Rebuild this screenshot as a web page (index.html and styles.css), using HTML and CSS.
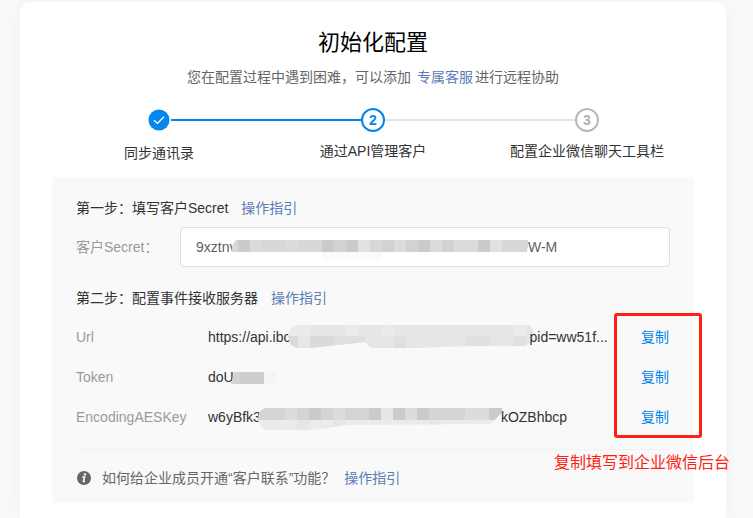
FILE: index.html
```html
<!DOCTYPE html>
<html lang="zh-CN">
<head>
  <meta charset="UTF-8">
  <meta name="viewport" content="width=device-width, initial-scale=1.0">
  <title>初始化配置</title>
  <link rel="stylesheet" href="styles.css">
</head>
<body>
  <main class="card">
    <h1>初始化配置</h1>
    <p class="subtitle">您在配置过程中遇到困难，可以添加 <a href="#">专属客服</a>进行远程协助</p>

    <ol class="steps">
      <li class="step done">
        <span class="step-icon">
          <svg width="24" height="24" viewBox="0 0 24 24" aria-hidden="true">
            <circle cx="12" cy="12" r="10.5" fill="#0486ec"/>
            <path d="M7 12.2l3.4 3.2 6.6-6.6" fill="none" stroke="#fff" stroke-width="1.3"/>
          </svg>
        </span>
        <span class="step-title">同步通讯录</span>
      </li>
      <li class="step active">
        <span class="step-icon">2</span>
        <span class="step-title">通过API管理客户</span>
      </li>
      <li class="step">
        <span class="step-icon">3</span>
        <span class="step-title">配置企业微信聊天工具栏</span>
      </li>
    </ol>

    <section class="panel">
      <h2>第一步：填写客户Secret <a href="#">操作指引</a></h2>
      <div class="form-row">
        <label for="secret">客户Secret：</label>
        <div class="field">
          <input type="text" id="secret" name="secret" value="9xztnv">
          <span class="field-mask">
            <svg width="296" height="20" viewBox="232 240 296 20" aria-hidden="true">
              <path d="M236 240H529L527 252H232Q231 244 236 240z" fill="#d7d8d9"/>
              <path d="M238 246h12M322 246h12M346 246h12M418 246h12M478 246h12" stroke="#cacbcd" stroke-width="12"/>
              <path d="M334 246h12M382 246h12M406 246h12M442 246h12" stroke="#d1d2d3" stroke-width="12"/>
              <path d="M250 246h12M286 246h12M394 246h12M430 246h12M454 246h24" stroke="#dbdbdc" stroke-width="12"/>
              <path d="M358 246h12M490 246h12" stroke="#e1e1e1" stroke-width="12"/>
              <path d="M322 256h60" stroke="#fafafa" stroke-width="8"/>
            </svg>
            <span>W-M</span>
          </span>
        </div>
      </div>

      <h2>第二步：配置事件接收服务器 <a href="#">操作指引</a></h2>
      <div class="config">
        <div class="config-row">
          <span class="config-name">Url</span>
          <span class="config-value">
            <span>https://api.ibc</span>
            <svg class="mask" width="246" height="24" viewBox="288 325 246 24" aria-hidden="true">
              <clipPath id="url-shape">
                <path d="M300 324H528Q534 328 534 336Q533 345 522 346L486 346Q450 346 420 348H372Q368 347 366 342L310 348H298Q289 347 288 336Q290 325 300 324z"/>
              </clipPath>
              <g clip-path="url(#url-shape)" stroke-width="12">
                <path d="M286 324h248v24H286z" fill="#e6e6e6"/>
                <path d="M286 330h24M346 330h12M382 330h12M514 330h12" stroke="#ebebeb"/>
                <path d="M286 342h12M310 342h24" stroke="#dadada"/>
                <path d="M334 342h32M394 342h12M466 342h24M514 342h12" stroke="#e0e0e0"/>
              </g>
            </svg>
            <span>pid=ww51f...</span>
          </span>
          <button type="button" class="copy">复制</button>
        </div>
        <div class="config-row">
          <span class="config-name">Token</span>
          <span class="config-value">
            <span>doU</span>
            <svg class="mask" width="45" height="24" viewBox="229 365 45 24" aria-hidden="true">
              <path d="M232 372H262V384H229z" fill="#d3d3d3"/>
              <path d="M238 378h24" stroke="#cdcdcd" stroke-width="12"/>
              <path d="M262 378h12" stroke="#f5f5f5" stroke-width="12"/>
            </svg>
          </span>
          <button type="button" class="copy">复制</button>
        </div>
        <div class="config-row">
          <span class="config-name">EncodingAESKey</span>
          <span class="config-value">
            <span>w6yBfk3</span>
            <svg class="mask" width="244" height="26" viewBox="259 404 244 26" aria-hidden="true">
              <clipPath id="key-shape">
                <path d="M266 408H503V412L492 424L345 425Q325 430 300 430H268Q259 427 259 418Q260 410 266 408z"/>
              </clipPath>
              <g clip-path="url(#key-shape)" stroke-width="12">
                <path d="M259 408h244v12H259z" fill="#d4d4d4"/>
                <path d="M259 420h244v12H259z" fill="#ebebeb"/>
                <path d="M310 414h12M370 414h12M394 414h12M418 414h12M490 414h13" stroke="#cbcbcb"/>
                <path d="M286 414h12M334 414h12M406 414h12M466 414h24" stroke="#dcdcdc"/>
                <path d="M382 414h12" stroke="#e6e6e6"/>
                <path d="M298 426h12M334 426h12M430 426h12" stroke="#e6e6e6"/>
              </g>
            </svg>
            <span class="tail">kOZBhbcp</span>
          </span>
          <button type="button" class="copy">复制</button>
        </div>
        <div class="highlight">
          <span class="highlight-note">复制填写到企业微信后台</span>
        </div>
      </div>

      <div class="tip">
        <svg width="16" height="16" viewBox="0 0 16 16" aria-hidden="true">
          <circle cx="8" cy="8" r="7" fill="#666"/>
          <circle cx="8.9" cy="4.4" r="1.2" fill="#fff"/>
          <path d="M6.3 7h2.3l-1.2 4.6h1.5" fill="none" stroke="#fff" stroke-width="1.5"/>
        </svg>
        <span>如何给企业成员开通“客户联系”功能？</span>
        <a href="#">操作指引</a>
      </div>
    </section>
  </main>
</body>
</html>
```

FILE: styles.css
```css
* {
  box-sizing: border-box;
}

body {
  margin: 0;
  padding: 2px 27px 0 20px;
  background-color: #f9f9f9;
  color: #333;
  font-family: "Liberation Sans", "Noto Sans CJK SC", sans-serif;
  font-size: 14px;
  line-height: 22px;
}

a {
  color: #5b7cb6;
  text-decoration: none;
}

.card {
  min-height: calc(100vh - 2px);
  padding: 25px 32px 16px;
  background-color: #fff;
  border-radius: 10px 10px 0 0;
  box-shadow: 0 0 16px rgba(0, 0, 0, 0.04);
}

h1 {
  margin: 0;
  color: #000;
  font-size: 22px;
  font-weight: normal;
  line-height: 32px;
  text-align: center;
}

.subtitle {
  margin: 7px 0 20px;
  color: #666;
  text-align: center;
}

.subtitle a {
  margin: 0 2px;
}

/* Steps */
.steps {
  display: grid;
  grid-template-columns: repeat(3, 1fr);
  margin: 0;
  padding: 0;
  list-style: none;
}

.step {
  display: flex;
  flex-direction: column;
  align-items: center;
  gap: 8px;
  position: relative;
}

.step.done {
  gap: 10px;
}

/* Line to the next step */
.step:not(:last-child)::after {
  content: "";
  position: absolute;
  top: 11px;
  left: calc(50% + 12px);
  width: calc(100% - 24px);
  height: 2px;
  background-color: #e4e4e4;
}

.step.done:not(:last-child)::after {
  background-color: #0486ec;
}

.step-icon {
  width: 24px;
  height: 24px;
  border: 2px solid #b9b9b9;
  border-radius: 50%;
  color: #b0b0b0;
  font-weight: bold;
  line-height: 20px;
  text-align: center;
}

.step.active .step-icon {
  border-color: #0486ec;
  color: #0486ec;
}

.step.done .step-icon {
  border: none;
}

.step-icon svg {
  display: block;
}

/* Panel */
.panel {
  margin-top: 13px;
  padding: 20px 24px 14px;
  background-color: #f9f9f9;
  border-radius: 4px;
}

h2 {
  margin: 0 0 8px;
  font-size: 14px;
  font-weight: normal;
  line-height: 22px;
}

h2 a {
  margin-left: 9px;
}

.form-row {
  display: flex;
  align-items: center;
  margin-bottom: 20px;
}

.form-row label {
  width: 104px;
  color: #999;
}

.field {
  flex: 1;
  position: relative;
}

.field input {
  display: block;
  width: 100%;
  height: 40px;
  padding: 0 15px;
  border: 1px solid #dcdfe6;
  border-radius: 4px;
  background-color: #fff;
  color: #606266;
  font: inherit;
}

.field-mask {
  display: flex;
  align-items: center;
  position: absolute;
  top: 0;
  left: 52px;
  height: 40px;
  color: #606266;
}

.field-mask svg {
  margin-top: 6px;
}

.config {
  position: relative;
}

.config-row {
  display: flex;
  align-items: center;
  height: 40px;
}

.config-name {
  width: 132px;
  color: #999;
}

.config-value {
  display: flex;
  flex: 1;
  align-items: center;
  white-space: nowrap;
}

.mask {
  flex: none;
  margin: 0 -4px 0 -3px;
}

.tail {
  margin-left: 3px;
}

.copy {
  padding: 0 1px 0 0;
  border: none;
  background: none;
  color: #0486ec;
  font: inherit;
  cursor: pointer;
}

/* Frame round the copy buttons */
.highlight {
  position: absolute;
  top: -4px;
  right: -32px;
  bottom: -1px;
  width: 88px;
  border: 3px solid #ff1f14;
  border-radius: 3px;
  pointer-events: none;
}

.highlight-note {
  position: absolute;
  top: calc(100% + 17px);
  right: -31px;
  color: #ff1f14;
  font-size: 16px;
  white-space: nowrap;
}

.tip {
  display: flex;
  align-items: center;
  margin-top: 12px;
  padding-top: 17px;
  border-top: 1px solid #f0f0f0;
  color: #666;
}

.tip svg {
  margin-right: 10px;
}

.tip a {
  margin-left: 9px;
}
```
